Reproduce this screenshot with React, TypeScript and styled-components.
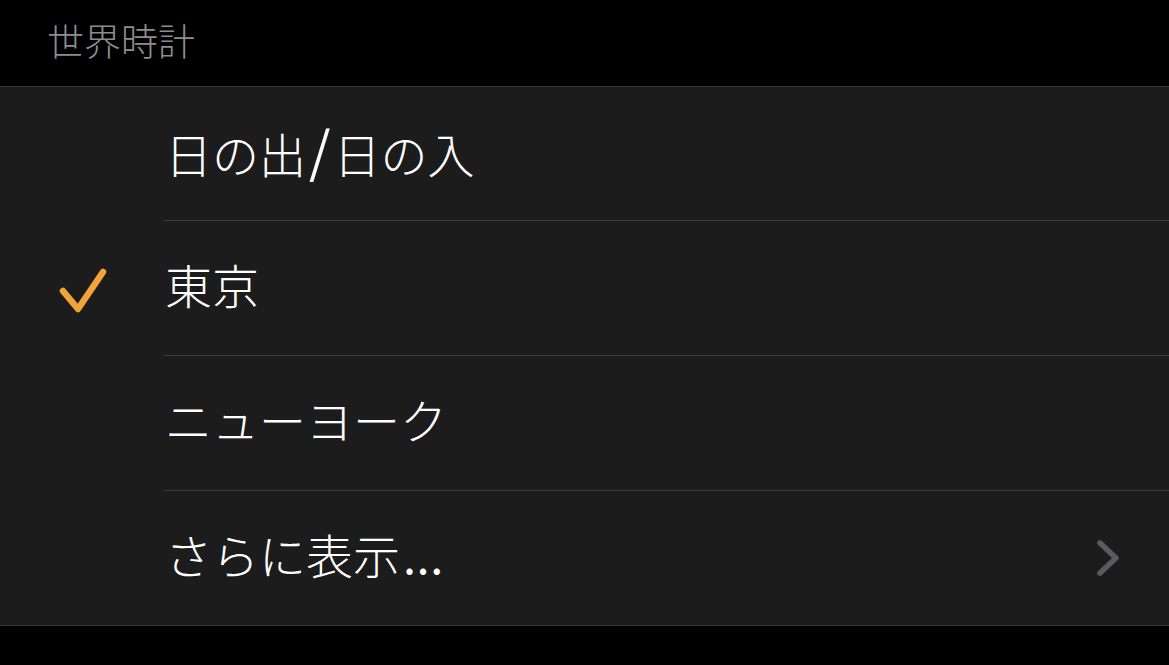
import React, { ReactElement } from "react";
import styled, { createGlobalStyle } from "styled-components";

const GlobalStyle = createGlobalStyle`
  html, body {
    margin: 0;
    padding: 0;
    background: #000;
  }
  body {
    font-family: "Noto Sans CJK JP", "Noto Sans", sans-serif;
    -webkit-font-smoothing: antialiased;
  }
`;

const Screen = styled.div`
  width: 1169px;
  height: 665px;
  background: #000;
  display: flex;
  flex-direction: column;
  overflow: hidden;
`;

const Header = styled.header`
  height: 87px;
  display: flex;
  align-items: center;
  padding: 0 0 6px 47px;
  border-bottom: 1px solid #3a3a3c;
  box-sizing: border-box;
`;

const Title = styled.h1`
  margin: 0;
  font-size: 37px;
  font-weight: 300;
  color: #8d8d8f;
  line-height: 1;
`;

const List = styled.ul`
  list-style: none;
  margin: 0;
  padding: 0;
  background: #1c1c1c;
`;

const Row = styled.li<{ $last?: boolean }>`
  display: flex;
  height: 135px;
  box-sizing: border-box;
  border-bottom: ${(p) => (p.$last ? "1px solid #3a3a3c" : "none")};

  &:first-child {
    height: 134px;
  }
`;

const IconCell = styled.div`
  width: 164px;
  flex-shrink: 0;
  display: flex;
  align-items: center;
  padding-left: 58px;
  box-sizing: border-box;
`;

const Content = styled.div<{ $last?: boolean }>`
  flex: 1;
  display: flex;
  align-items: center;
  justify-content: space-between;
  padding: 0 48px 9px 0;
  border-bottom: ${(p) => (p.$last ? "none" : "1px solid #3a3a3c")};
`;

const Label = styled.span`
  font-size: 47px;
  font-weight: 300;
  color: #fff;
  line-height: 1;
  margin-left: 1px;
  white-space: nowrap;
`;

const Slash = styled.span`
  font-size: 55px;
  font-weight: 400;
  margin: 0 3px;
  position: relative;
  top: -1px;
`;

const Dots = styled.span`
  font-weight: 400;
  letter-spacing: 0.5px;
  margin-left: 3px;
`;

const ChevronWrap = styled.span`
  display: flex;
  margin-top: 9px;
`;

const Check = () => (
  <svg width="50" height="50" viewBox="0 0 50 50" fill="none">
    <path
      d="M5 27 L20 45 L45 8"
      stroke="#f2a43a"
      strokeWidth="6.5"
      strokeLinecap="round"
      strokeLinejoin="round"
    />
  </svg>
);

const Chevron = () => (
  <svg width="26" height="42" viewBox="0 0 26 42" fill="none">
    <path
      d="M5 6 L21 21 L5 36"
      stroke="#5b5b5f"
      strokeWidth="5.5"
      strokeLinecap="round"
      strokeLinejoin="round"
    />
  </svg>
);

interface Item {
  label: React.ReactNode;
  key: string;
  checked?: boolean;
  more?: boolean;
}

const items: Item[] = [
  {
    key: "sun",
    label: (
      <>
        日の出<Slash>/</Slash>日の入
      </>
    ),
  },
  { key: "tokyo", label: "東京", checked: true },
  { key: "ny", label: "ニューヨーク" },
  {
    key: "more",
    label: (
      <>
        さらに表示<Dots>...</Dots>
      </>
    ),
    more: true,
  },
];

export default function App(): ReactElement {
  return (
    <>
      <GlobalStyle />
      <Screen>
        <Header>
          <Title>世界時計</Title>
        </Header>
        <List>
          {items.map((item, i) => {
            const last = i === items.length - 1;
            return (
              <Row key={item.key} $last={last}>
                <IconCell>{item.checked && <Check />}</IconCell>
                <Content $last={last}>
                  <Label>{item.label}</Label>
                  {item.more && (
                    <ChevronWrap>
                      <Chevron />
                    </ChevronWrap>
                  )}
                </Content>
              </Row>
            );
          })}
        </List>
      </Screen>
    </>
  );
}
